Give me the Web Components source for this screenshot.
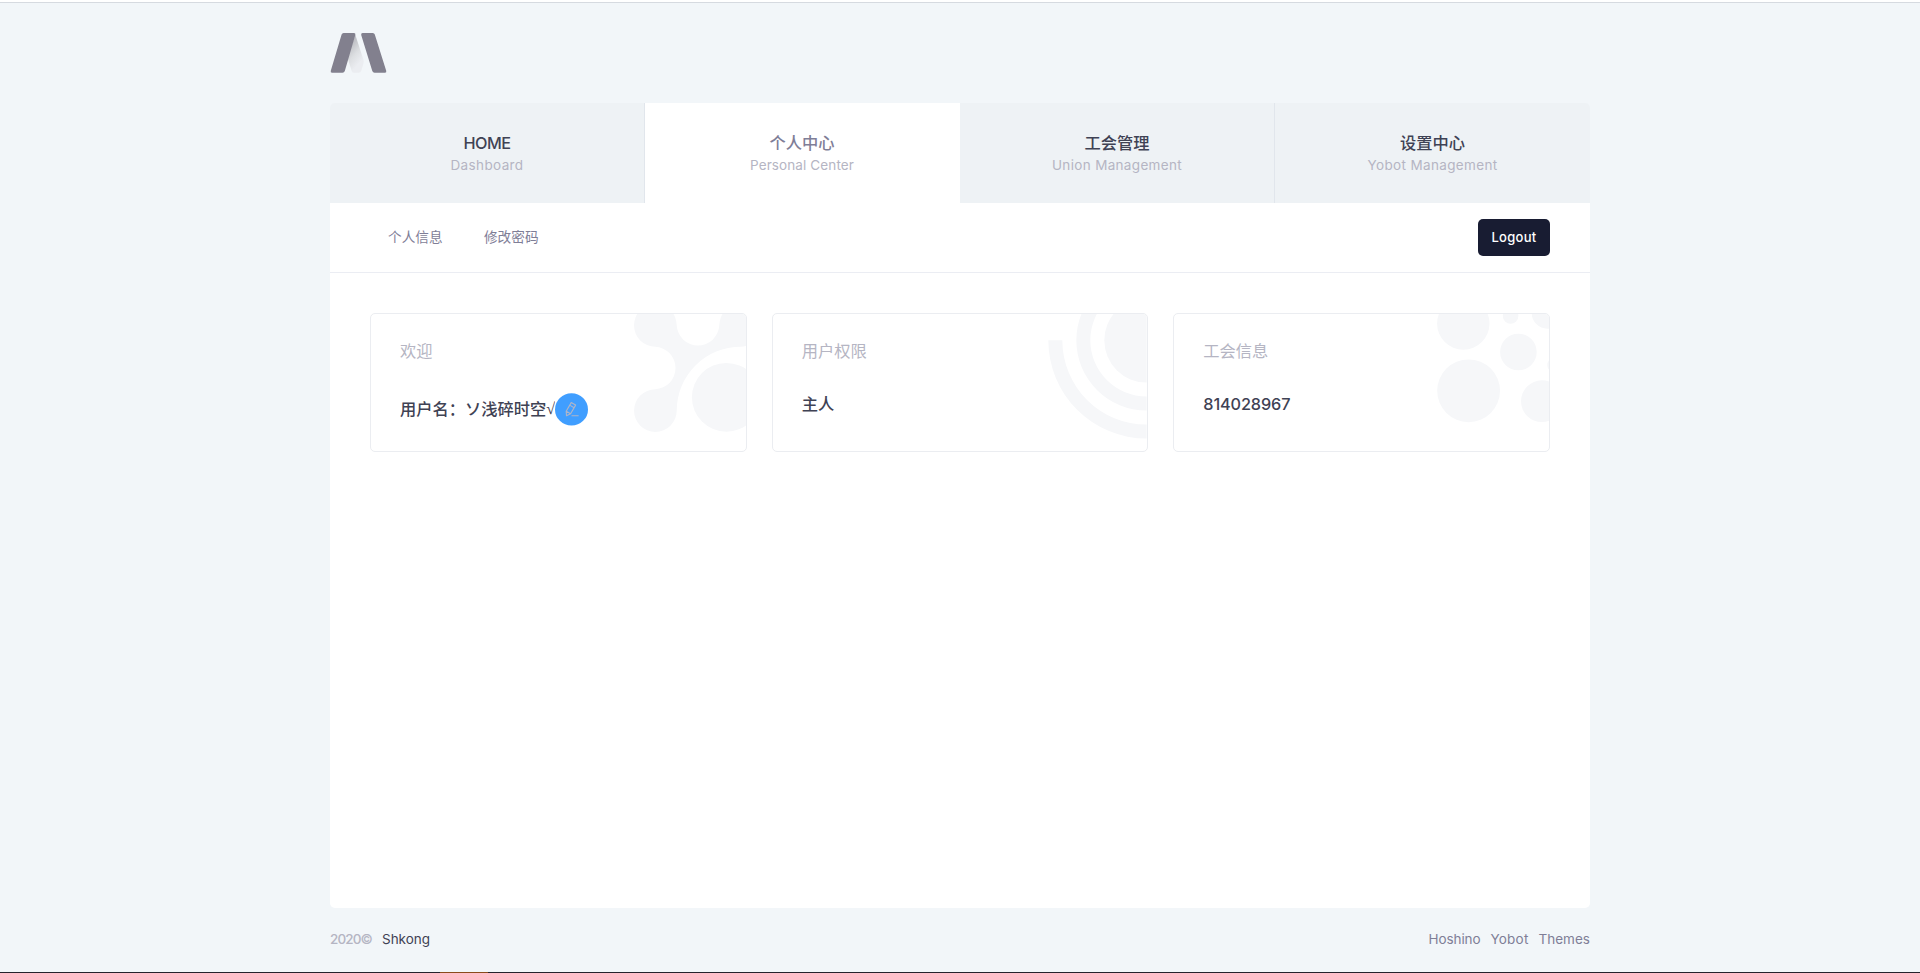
<!DOCTYPE html>
<html lang="zh-CN">
<head>
<meta charset="utf-8">
<title>Personal Center</title>
<style>
html,body{margin:0;height:100%;overflow:hidden}
body{background:#f2f6f9;font-family:Inter,"Noto Sans CJK SC",sans-serif;font-size:13px;color:#3f4254}
</style>
</head>
<body>
<app-page></app-page>
<script>
const define = (name, html, setup) => customElements.define(name, class extends HTMLElement {
  connectedCallback() {
    if (this.shadowRoot) return;
    const t = document.createElement('template');
    t.innerHTML = html;
    this.attachShadow({mode: 'open'}).append(t.content.cloneNode(true));
    if (setup) setup(this, this.shadowRoot);
  }
});

/* Text run whose tracking is spread so that it fills the width in its "w" attribute. */
define('tracked-text', `<style>:host{display:inline-block;white-space:nowrap}span{display:inline-block}</style><span><slot></slot></span>`, host => {
  const target = parseFloat(host.getAttribute('w'));
  const n = host.textContent.length;
  const natural = host.getBoundingClientRect().width;
  const gap = (target - natural) / n;
  host.style.letterSpacing = gap.toFixed(3) + 'px';
});

define('brand-logo', `<style>:host{display:block;width:57px;height:42px}svg{display:block}</style>
<svg width="57" height="42" viewBox="330 32 57 42">
<defs><linearGradient id="g" x1="348" y1="48" x2="362" y2="60" gradientUnits="userSpaceOnUse"><stop offset="0" stop-color="#c0c1c6"/><stop offset=".5" stop-color="#dcdee1"/><stop offset="1" stop-color="#ebedf1"/></linearGradient></defs>
<path fill="url(#g)" d="M355.2 34.5L363.4 59.5Q364 61.5 363.5 63.2L361.3 70.8Q360.6 72.8 358.6 72.8H354Q352.4 72.8 351.8 71.2L347.6 58Z"/>
<path fill="#82808e" d="M343.6 33H354Q355.8 33 355.3 34.9L344.8 71Q344.2 72.8 342.5 72.8H332Q330.2 72.8 330.8 70.8L341.6 34.6Q342.1 33 343.6 33Z"/>
<path fill="#82808e" d="M362.6 33H372.8Q374.3 33 374.8 34.6L386.2 70.8Q386.8 72.8 385 72.8H374.6Q372.9 72.8 372.3 71L361.2 34.9Q360.8 33 362.6 33Z"/>
</svg>`);

define('nav-tab', `<style>
:host{display:flex;flex-direction:column;align-items:center;box-sizing:border-box;height:100px;padding-top:28px;background:#eef2f5;border-right:1px solid #e1e6ec}
:host([active]){background:#fff;border-color:#fff;color:#7f7e97}
:host(:last-of-type){border-right:0}
.t{font-size:16.25px;font-weight:500;line-height:24px;height:24px}
.s{color:#b5b5c3;font-size:13.5px;line-height:20px;height:20px}
</style><div class="t"><slot></slot></div><div class="s"><slot name="sub"></slot></div>`);

define('main-nav', `<style>:host{display:grid;grid-template-columns:repeat(4,1fr);border-radius:5px 5px 0 0;overflow:hidden}</style>
<nav-tab><tracked-text w="47">HOME</tracked-text><tracked-text slot="sub" w="73">Dashboard</tracked-text></nav-tab>
<nav-tab active>个人中心<tracked-text slot="sub" w="104">Personal Center</tracked-text></nav-tab>
<nav-tab>工会管理<tracked-text slot="sub" w="130">Union Management</tracked-text></nav-tab>
<nav-tab>设置中心<tracked-text slot="sub" w="130">Yobot Management</tracked-text></nav-tab>`);

define('sub-bar', `<style>
:host{display:flex;align-items:center;justify-content:space-between;box-sizing:border-box;height:70px;padding:0 40px 0 58px;border-bottom:1px solid #ebedf3}
nav{display:flex;gap:41.4px;padding-bottom:4px;font-size:13.65px;color:#7f7e97}
button{all:unset;box-sizing:border-box;width:72px;height:37px;border-radius:5px;background:#181c32;color:#fff;font-weight:500;text-align:center;line-height:37px}
</style><nav><span>个人信息</span><span>修改密码</span></nav><button><tracked-text w="45">Logout</tracked-text></button>`);

define('info-card', `<style>
:host{display:block;position:relative;box-sizing:border-box;height:139px;border:1px solid #ebedf1;border-radius:5px;overflow:hidden;padding:25px 29px;font-size:16.25px}
.art{position:absolute;inset:0;pointer-events:none}
.l{position:relative;height:26px;line-height:26px;color:#b5b5c3;margin-top:-1px}
.v{position:relative;display:flex;align-items:center;margin-top:25px;height:30px;line-height:30px;font-weight:500}
:host([tall]) .v{margin-top:30px}
</style><div class="art"><slot name="art"></slot></div><div class="l"><slot name="label"></slot></div><div class="v"><slot></slot></div>`);

define('edit-button', `<style>:host{display:block;width:33px;height:33px;flex:none}svg{display:block}</style>
<svg width="33" height="33" viewBox="0 0 33 33"><ellipse cx="16.5" cy="16.4" rx="16.5" ry="16.2" fill="#409eff"/>
<g fill="none" stroke="#b0b5c8" stroke-width="1.1" stroke-linejoin="round"><path d="M11.2 18.2L16.2 9.6L20.6 12.1L15.6 20.7L11.5 22.8ZM14.7 12.1L19.1 14.7M11.2 18.2L15.6 20.7M16.5 22.8H23.6"/></g></svg>`);

define('card-art', `<style>:host{display:block}svg{display:block;fill:#f6f7f9}</style>
<svg width="375" height="137"></svg>`, (host, root) => {
  const art = {
    blobs: ['371 314 375 137', `<path d="M634 325.3A21.33 21.33 0 0 1 676.7 325.3A21.33 21.33 0 0 0 719.3 325.3A21.33 21.33 0 0 1 762 325.3A21.33 21.33 0 0 1 740.7 346.7A64 64 0 0 0 676.7 410.7A21.33 21.33 0 1 1 655.3 389.3A21.33 21.33 0 0 0 655.3 346.7A21.33 21.33 0 0 1 634 325.3Z"/><circle cx="726.3" cy="397.3" r="34.4"/>`],
    rings: ['772.67 314 375 137', `<path d="M1146.3 298V382.6A42.3 42.3 0 0 1 1146.3 298Z"/><path d="M1146.3 270A70.3 70.3 0 0 0 1146.3 410.6V396.6A56.3 56.3 0 0 1 1146.3 284Z"/><path d="M1048 340.3A98.3 98.3 0 0 0 1146.3 438.6V424.6A84.3 84.3 0 0 1 1062 340.3Z"/>`],
    dots: ['1173.9 314 375 137', `<circle cx="1468.5" cy="390.8" r="31.4"/><circle cx="1463.2" cy="323.5" r="26.2"/><circle cx="1510.5" cy="315.9" r="7.8"/><circle cx="1547.3" cy="313" r="15.7"/><circle cx="1518.3" cy="352" r="18.3"/><circle cx="1541.8" cy="401.2" r="20.9"/><circle cx="1555" cy="365" r="7.8"/>`]
  }[host.getAttribute('kind')];
  const svg = root.querySelector('svg');
  svg.setAttribute('viewBox', art[0]);
  svg.innerHTML = art[1];
});

define('card-row', `<style>:host{display:grid;grid-template-columns:repeat(3,1fr);gap:25px;padding:40px}
.root{font-family:"Liberation Serif",serif;font-weight:400;width:8.8px;display:inline-block;overflow:hidden}
</style>
<info-card tall><card-art slot="art" kind="blobs"></card-art><span slot="label">欢迎</span><span>用户名：ソ浅碎时空</span><span class="root">√</span><edit-button></edit-button></info-card>
<info-card><card-art slot="art" kind="rings"></card-art><span slot="label">用户权限</span>主人</info-card>
<info-card><card-art slot="art" kind="dots"></card-art><span slot="label">工会信息</span><tracked-text w="87">814028967</tracked-text></info-card>`);

define('page-footer', `<style>:host{display:flex;justify-content:space-between;height:64px;line-height:63px;font-size:13.5px;color:#7f7e97}
div{display:flex;gap:10px}.y{color:#b5b5c3;font-weight:500}.n{color:#3f4254}</style>
<div><tracked-text class="y" w="42">2020©</tracked-text><tracked-text class="n" w="48">Shkong</tracked-text></div>
<div><tracked-text w="52">Hoshino</tracked-text><tracked-text w="38">Yobot</tracked-text><tracked-text w="51.5">Themes</tracked-text></div>`);

define('app-page', `<style>
:host{display:flex;flex-direction:column;height:973px}
.top{height:2px;background:#fff;border-bottom:1px solid #d6dae0;flex:none}
.wrap{width:1260px;margin:0 auto;flex:1;display:flex;flex-direction:column}
header{height:71px;padding-top:29px}
main{flex:1;background:#fff;border-radius:0 0 5px 5px}
.end{flex:none;height:1px;background:linear-gradient(90deg,#25222c 440px,#8a4b1c 440px,#8a4b1c 488px,#25222c 488px)}
</style>
<div class="top"></div>
<div class="wrap"><header><brand-logo></brand-logo></header><main-nav></main-nav><main><sub-bar></sub-bar><card-row></card-row></main><page-footer></page-footer></div>
<div class="end"></div>`);
</script>
</body>
</html>
